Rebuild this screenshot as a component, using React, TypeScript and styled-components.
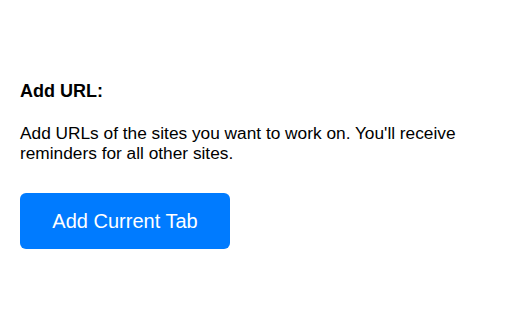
import React, { FC } from 'react';
import styled, { createGlobalStyle } from 'styled-components';

const GlobalStyle = createGlobalStyle`
  html, body {
    margin: 0;
    padding: 0;
    background: #ffffff;
  }
  body {
    font-family: 'Liberation Sans', Arial, sans-serif;
    color: #000000;
  }
`;

const Page = styled.div`
  width: 512px;
  height: 320px;
  box-sizing: border-box;
  padding: 81px 20px 0;
  display: flex;
  flex-direction: column;
  align-items: flex-start;
`;

const Heading = styled.h3`
  margin: 0 0 22px;
  font-size: 18px;
  line-height: 20px;
  font-weight: bold;
`;

const Description = styled.p`
  margin: 0 0 30px;
  font-size: 17.3px;
  line-height: 20px;
  width: 472px;
`;

const PrimaryButton = styled.button`
  font-family: inherit;
  font-size: 20px;
  line-height: 24px;
  padding: 16px 31px;
  width: 210px;
  color: #ffffff;
  background: #007bff;
  border: none;
  border-radius: 6px;
  cursor: pointer;
`;

const App: FC = () => (
  <>
    <GlobalStyle />
    <Page>
      <Heading>Add URL:</Heading>
      <Description>
        Add URLs of the sites you want to work on. You'll receive reminders for all other sites.
      </Description>
      <PrimaryButton>Add Current Tab</PrimaryButton>
    </Page>
  </>
);

export default App;
